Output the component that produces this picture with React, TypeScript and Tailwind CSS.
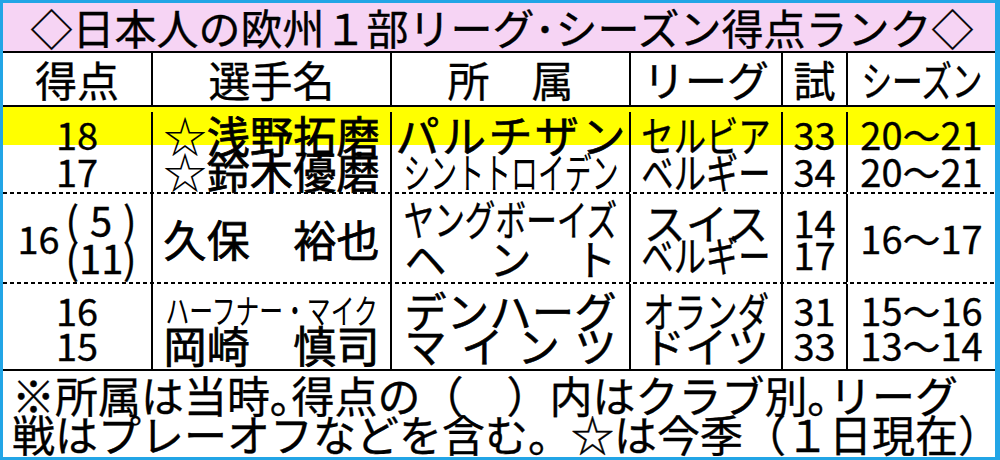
import React from 'react';

const cols = 'grid grid-cols-[150px_239px_239px_152px_65px_147px]';
const heavy = '[-webkit-text-stroke:0.8px_#000]';

function Cell({ children, last = false, className = '' }: { children: React.ReactNode; last?: boolean; className?: string }) {
  return (
    <div className={`flex flex-col items-center justify-center ${last ? '' : 'border-r-2 border-black'} ${className}`}>
      {children}
    </div>
  );
}

// 均等割り: characters spread over a fixed width
function Spread({ text, className = '' }: { text: string; className?: string }) {
  return (
    <div className={`flex shrink-0 justify-between ${className}`}>
      {Array.from(text).map((c, i) => (
        <span key={i} className={c === '☆' ? '[-webkit-text-stroke:0px]' : ''}>
          {c}
        </span>
      ))}
    </div>
  );
}

// 長体: horizontally condensed text
function Squeeze({ text, className = '' }: { text: string; className?: string }) {
  return <span className={`block shrink-0 whitespace-nowrap ${className}`}>{text}</span>;
}

function Dashed() {
  return <div className="h-[2px] bg-[repeating-linear-gradient(90deg,#000_0_4px,transparent_4px_7px)]" />;
}

export default function App() {
  return (
    <div className="w-[1000px] h-[460px] overflow-hidden border-l-[3px] border-r-[5px] border-t-[3px] border-b-[3px] border-[#22a5e6] bg-white text-black font-['Noto_Sans_CJK_JP',sans-serif] font-normal [-webkit-text-stroke:0.35px_#000]">
      {/* title */}
      <div className="h-[50px] border-b-2 border-black bg-[#f6d4f4] flex items-center justify-center pl-[6px] text-[42px] leading-none">
        ◇日本人の欧州１部リーグ･シーズン得点ランク◇
      </div>

      {/* header */}
      <div className={`${cols} h-[54px] border-b-2 border-black text-[42px] leading-none`}>
        <Cell>得点</Cell>
        <Cell>選手名</Cell>
        <Cell>所　属</Cell>
        <Cell>リーグ</Cell>
        <Cell>試</Cell>
        <Cell last>
          <Squeeze text="シーズン" className="scale-x-[0.73]" />
        </Cell>
      </div>

      {/* 浅野 */}
      <div className={`${cols} h-[38px] bg-[#ffff00] leading-none pt-[5px]`}>
        <Cell className="text-[38px]">18</Cell>
        <Cell className={`text-[43px] ${heavy}`}>
          <Spread text="☆浅野拓磨" className="w-[216px]" />
        </Cell>
        <Cell className="text-[44px] [-webkit-text-stroke:0.6px_#000]">
          <Spread text="パルチザン" className="w-[230px]" />
        </Cell>
        <Cell className="text-[42px]">
          <Squeeze text="セルビア" className="scale-x-[0.77]" />
        </Cell>
        <Cell className="text-[38px]">33</Cell>
        <Cell last className="text-[38px]">20〜21</Cell>
      </div>

      {/* 鈴木 */}
      <div className={`${cols} h-[47px] leading-none pt-[4px]`}>
        <Cell className="text-[38px]">17</Cell>
        <Cell className={`text-[43px] ${heavy}`}>
          <Spread text="☆鈴木優磨" className="w-[216px]" />
        </Cell>
        <Cell className="text-[42px] [-webkit-text-stroke:0px]">
          <Squeeze text="シントトロイデン" className="scale-x-[0.64]" />
        </Cell>
        <Cell className="text-[42px]">
          <Squeeze text="ベルギー" className="scale-x-[0.77]" />
        </Cell>
        <Cell className="text-[38px]">34</Cell>
        <Cell last className="text-[38px]">20〜21</Cell>
      </div>
      <Dashed />

      {/* 久保 */}
      <div className={`${cols} h-[88px] leading-none`}>
        <Cell>
          <div className="flex items-center gap-[6px]">
            <span className="text-[38px]">16</span>
            <div className="flex flex-col text-[40px] leading-[38px]">
              <div className="flex">
                <span>(</span>
                <span className="w-[44px] text-center">5</span>
                <span>)</span>
              </div>
              <div className="flex">
                <span>(</span>
                <span className="w-[44px] text-center">11</span>
                <span>)</span>
              </div>
            </div>
          </div>
        </Cell>
        <Cell className={`text-[43px] ${heavy}`}>
          <Spread text="久保　裕也" className="w-[216px]" />
        </Cell>
        <Cell className="text-[42px] leading-[40px]">
          <Squeeze text="ヤングボーイズ" className="scale-x-[0.73]" />
          <Spread text="ヘント" className="w-[212px]" />
        </Cell>
        <Cell className="text-[42px] leading-[32px]">
          <span>スイス</span>
          <Squeeze text="ベルギー" className="scale-x-[0.77]" />
        </Cell>
        <Cell className="text-[38px] leading-[32px]">
          <span>14</span>
          <span>17</span>
        </Cell>
        <Cell last className="text-[38px]">16〜17</Cell>
      </div>
      <Dashed />

      {/* ハーフナー / 岡崎 */}
      <div className={`${cols} h-[87px] border-b-2 border-black leading-[35px]`}>
        <Cell className="text-[38px]">
          <span>16</span>
          <span>15</span>
        </Cell>
        <Cell>
          <Squeeze text="ハーフナー・マイク" className="text-[34px] scale-x-[0.7] [-webkit-text-stroke:0px]" />
          <Spread text="岡崎　慎司" className={`w-[216px] text-[43px] ${heavy}`} />
        </Cell>
        <Cell className="text-[42px] [-webkit-text-stroke:0.6px_#000]">
          <Spread text="デンハーグ" className="w-[212px]" />
          <Spread text="マインツ" className="w-[212px]" />
        </Cell>
        <Cell className="text-[42px]">
          <Squeeze text="オランダ" className="scale-x-[0.75]" />
          <span>ドイツ</span>
        </Cell>
        <Cell className="text-[38px]">
          <span>31</span>
          <span>33</span>
        </Cell>
        <Cell last className="text-[38px]">
          <span>15〜16</span>
          <span>13〜14</span>
        </Cell>
      </div>

      {/* note */}
      <div className="h-[86px] px-[9px] pt-[4px] text-[43px] leading-[39px] whitespace-nowrap">
        <div>※所属は当時｡得点の（　）内はクラブ別｡リーグ</div>
        <div>戦はプレーオフなどを含む。☆は今季（１日現在）</div>
      </div>
    </div>
  );
}
